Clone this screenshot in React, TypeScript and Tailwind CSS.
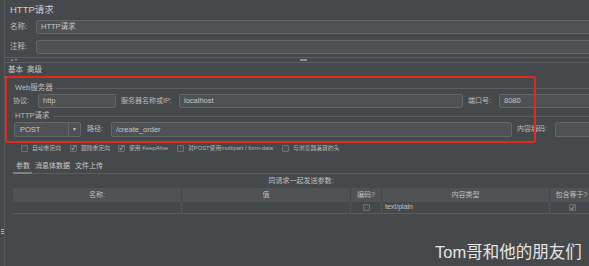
import React from "react";

const FONT = { fontFamily: '"Liberation Sans", "Noto Sans CJK SC", sans-serif' };

function Box({ className = "", children }: { className?: string; children?: React.ReactNode }) {
  return (
    <div
      className={`h-[14px] bg-[#4e5254] border border-[#63676a] rounded-[2px] flex items-center px-[4px] text-[7.5px] text-[#c4c4c4] ${className}`}
    >
      {children}
    </div>
  );
}

function Check({ on }: { on?: boolean }) {
  return (
    <span className="w-[7px] h-[7px] border border-[#6c7073] bg-[#4a4e50] rounded-[1px] flex items-center justify-center text-[6px] leading-none text-[#d0d0d0] shrink-0">
      {on ? "✓" : ""}
    </span>
  );
}

function Group({ title }: { title: string }) {
  return (
    <div className="h-[12px] flex items-center gap-[3px] pl-[10px]">
      <span className="text-[7.5px] text-[#bdbdbd]">{title}</span>
      <div className="flex-1 h-px bg-[#5a5e61]" />
    </div>
  );
}

export default function App() {
  const opts: [string, boolean, string][] = [
    ["自动重定向", false, "w-[49px]"],
    ["跟随重定向", true, "w-[48px]"],
    ["使用 KeepAlive", true, "w-[59px]"],
    ["对POST使用multipart / form-data", false, "w-[105px]"],
    ["与浏览器兼容的头", false, ""],
  ];

  return (
    <div className="relative w-[589px] h-[266px] overflow-hidden bg-[#46494b] text-[#bdbdbd]" style={FONT}>
      <div className="flex h-full">
        <div className="w-[4px] shrink-0" />
        <div className="w-px bg-[#55595c] shrink-0" />
        <div className="flex-1 flex flex-col min-w-0">
          {/* title */}
          <div className="h-[20px] pl-[5px] pt-[4px] text-[9.5px] text-[#cdcdcd] leading-[11px]">HTTP请求</div>

          <div className="h-[14px] flex items-center">
            <span className="w-[31px] pl-[5px] text-[7.5px]">名称:</span>
            <Box className="flex-1 -mr-[4px]">HTTP请求</Box>
          </div>
          <div className="h-[6px]" />
          <div className="h-[14px] flex items-center">
            <span className="w-[31px] pl-[5px] text-[7.5px]">注释:</span>
            <Box className="flex-1 -mr-[4px]" />
          </div>

          {/* splitter */}
          <div className="mt-[3px] h-[6px] border-t border-b border-[#5a5e61] flex items-center relative">
            <span className="pl-[5px] text-[4px] leading-none text-[#9a9a9a]">▲▼</span>
            <span className="absolute left-[295px] top-[1px] w-[7px] h-[2px] bg-[#8c8f91]" />
          </div>

          {/* tabs */}
          <div className="h-[15px] flex items-end text-[7.5px] text-[#c8c8c8]">
            <span className="w-[19px] pl-[3px] pb-[1px] border-b-2 border-[#7d8184]">基本</span>
            <span className="pl-[3px] pb-[3px]">高级</span>
          </div>

          <div className="h-[4px]" />
          <Group title="Web服务器" />
          <div className="h-[14px] flex items-center text-[7px]">
            <span className="w-[33px] pl-[8px]">协议:</span>
            <Box className="w-[78px]">http</Box>
            <span className="w-[63px] pl-[5px] whitespace-nowrap">服务器名称或IP:</span>
            <Box className="w-[284px]">localhost</Box>
            <span className="w-[36px] pl-[5px]">端口号:</span>
            <Box className="flex-1 -mr-[4px]">8080</Box>
          </div>
          <div className="h-[2px]" />
          <Group title="HTTP请求" />
          <div className="h-[15px] flex items-center text-[7px]">
            <div className="ml-[9px] w-[67px] h-[15px] bg-[#4e5254] border border-[#63676a] rounded-[2px] flex">
              <span className="flex-1 pl-[5px] flex items-center text-[7.5px] text-[#c8c8c8]">POST</span>
              <span className="w-[12px] border-l border-[#63676a] flex items-center justify-center text-[5px] text-[#c8c8c8]">▼</span>
            </div>
            <span className="w-[30px] pl-[6px]">路径:</span>
            <Box className="w-[401px] h-[15px]">/create_order</Box>
            <span className="w-[43px] pl-[5px] whitespace-nowrap">内容编码:</span>
            <Box className="flex-1 h-[15px] -mr-[4px]" />
          </div>

          {/* options */}
          <div className="h-[7px]" />
          <div className="h-[8px] flex items-center pl-[16px] text-[5.8px] text-[#b5b5b5]">
            {opts.map(([t, on, w]) => (
              <div key={t} className={`flex items-center gap-[4px] ${w} shrink-0`}>
                <Check on={on} />
                <span className="whitespace-nowrap">{t}</span>
              </div>
            ))}
          </div>

          {/* param tabs */}
          <div className="h-[13px] mt-[9px] flex items-end text-[7px] text-[#c8c8c8] ml-[8px] -mr-[4px] border-b border-[#595d60]">
            <span className="w-[19px] pl-[3px] pb-[1px] border-b-2 border-[#7d8184] -mb-px">参数</span>
            <span className="pl-[3px] pb-[2px]">消息体数据</span>
            <span className="pl-[5px] pb-[2px]">文件上传</span>
          </div>
          <div className="h-[14px] flex items-center justify-center text-[7px] ml-[8px] text-[#c0c0c0]">同请求一起发送参数:</div>

          {/* table */}
          <div className="ml-[8px] -mr-[4px] text-[7px]">
            <div className="h-[14px] flex bg-[#4f5356] text-[#bdbdbd]">
              <span className="w-[169px] border-r border-[#43474a] flex items-center justify-center">名称:</span>
              <span className="w-[169px] border-r border-[#43474a] flex items-center justify-center">值</span>
              <span className="w-[31px] border-r border-[#43474a] flex items-center justify-center">编码?</span>
              <span className="w-[168px] border-r border-[#43474a] flex items-center justify-center">内容类型</span>
              <span className="flex-1 flex items-center justify-center">包含等于?</span>
            </div>
            <div className="h-[12px] flex border-b border-[#595d60] text-[#c0c0c0]">
              <span className="w-[169px] border-r border-[#55595c]" />
              <span className="w-[169px] border-r border-[#55595c]" />
              <span className="w-[31px] border-r border-[#55595c] flex items-center justify-center">
                <Check />
              </span>
              <span className="w-[168px] border-r border-[#55595c] flex items-center pl-[3px]">text/plain</span>
              <span className="flex-1 flex items-center justify-center pl-[2px]">
                <Check on />
              </span>
            </div>
          </div>
        </div>
      </div>

      {/* left grip */}
      <div className="absolute left-[1px] top-[229px] w-[3px] h-[6px] flex flex-col gap-px">
        <span className="h-px bg-[#a9acae]" />
        <span className="h-px bg-[#a9acae]" />
        <span className="h-px bg-[#a9acae]" />
      </div>

      {/* annotation */}
      <div className="absolute left-[5px] top-[76px] w-[531px] h-[67px] border-2 border-[#e02a1c] rounded-[3px]" />

      {/* watermark */}
      <div className="absolute left-[435px] top-[243px] text-[16.5px] leading-[18px] text-[#e4e4e4] whitespace-nowrap">
        Tom哥和他的朋友们
      </div>
    </div>
  );
}
